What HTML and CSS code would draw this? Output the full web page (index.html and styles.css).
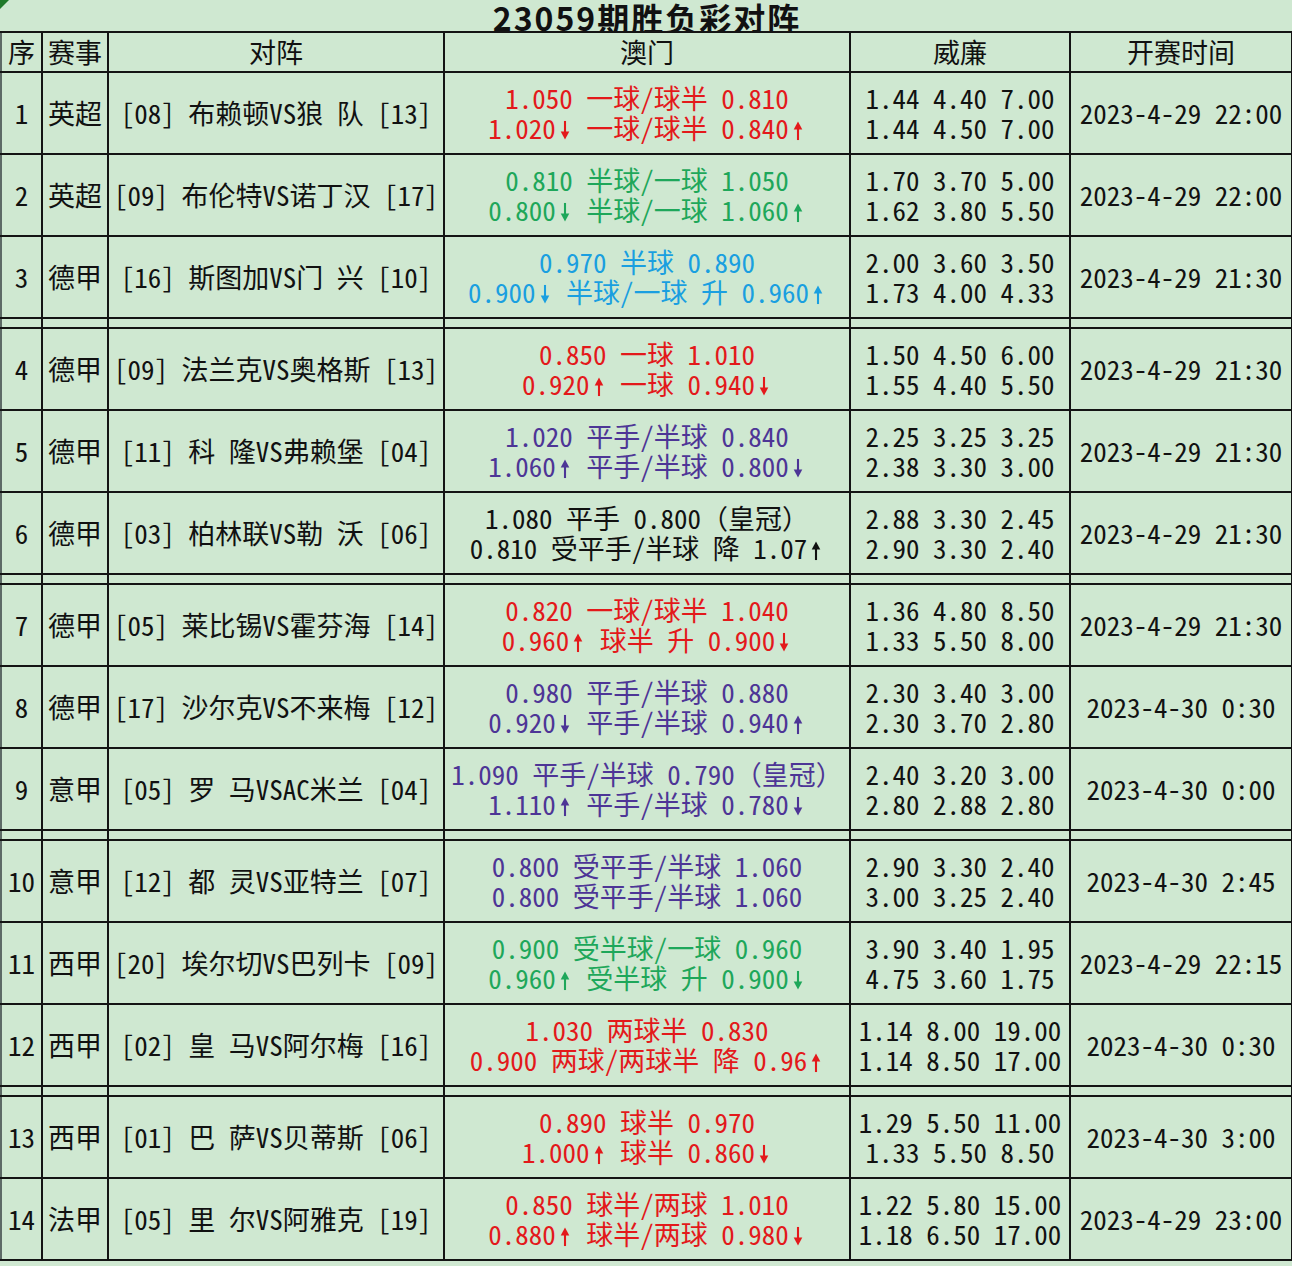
FILE: index.html
```html
<!DOCTYPE html>
<html lang="zh-CN">
<head>
<meta charset="utf-8">
<title>23059期胜负彩对阵</title>
<link rel="stylesheet" href="styles.css">
</head>
<body>
<svg width="0" height="0" class="defs" aria-hidden="true">
  <defs>
    <symbol id="up" viewBox="0 0 14 22"><path d="M7 21V8" stroke="currentColor" stroke-width="2.2" fill="none"/><path d="M2.5 10L7 1.5L11.5 10Z" fill="currentColor"/></symbol>
    <symbol id="dn" viewBox="0 0 14 22"><path d="M7 1V14" stroke="currentColor" stroke-width="2.2" fill="none"/><path d="M2.5 12L7 20.5L11.5 12Z" fill="currentColor"/></symbol>
  </defs>
</svg>
<div class="sheet">
  <span class="marker"></span>
  <div class="title">23059期胜负彩对阵</div>
  <table class="grid">
    <colgroup>
      <col class="c1"><col class="c2"><col class="c3"><col class="c4"><col class="c5"><col class="c6">
    </colgroup>
    <tr class="head"><td>序</td><td>赛事</td><td>对阵</td><td>澳门</td><td>威廉</td><td>开赛时间</td></tr>

    <tr class="row"><td>1</td><td>英超</td><td>[08] 布赖顿VS狼 队 [13]</td>
      <td class="red"><div>1.050 一球/球半 0.810</div><div>1.020<svg class="ar"><use href="#dn"/></svg> 一球/球半 0.840<svg class="ar"><use href="#up"/></svg></div></td>
      <td><div>1.44 4.40 7.00</div><div>1.44 4.50 7.00</div></td><td>2023-4-29 22:00</td></tr>
    <tr class="row"><td>2</td><td>英超</td><td>[09] 布伦特VS诺丁汉 [17]</td>
      <td class="green"><div>0.810 半球/一球 1.050</div><div>0.800<svg class="ar"><use href="#dn"/></svg> 半球/一球 1.060<svg class="ar"><use href="#up"/></svg></div></td>
      <td><div>1.70 3.70 5.00</div><div>1.62 3.80 5.50</div></td><td>2023-4-29 22:00</td></tr>
    <tr class="row"><td>3</td><td>德甲</td><td>[16] 斯图加VS门 兴 [10]</td>
      <td class="cyan"><div>0.970 半球 0.890</div><div>0.900<svg class="ar"><use href="#dn"/></svg> 半球/一球 升 0.960<svg class="ar"><use href="#up"/></svg></div></td>
      <td><div>2.00 3.60 3.50</div><div>1.73 4.00 4.33</div></td><td>2023-4-29 21:30</td></tr>
    <tr class="gap"><td></td><td></td><td></td><td></td><td></td><td></td></tr>

    <tr class="row"><td>4</td><td>德甲</td><td>[09] 法兰克VS奥格斯 [13]</td>
      <td class="red"><div>0.850 一球 1.010</div><div>0.920<svg class="ar"><use href="#up"/></svg> 一球 0.940<svg class="ar"><use href="#dn"/></svg></div></td>
      <td><div>1.50 4.50 6.00</div><div>1.55 4.40 5.50</div></td><td>2023-4-29 21:30</td></tr>
    <tr class="row"><td>5</td><td>德甲</td><td>[11] 科 隆VS弗赖堡 [04]</td>
      <td class="purple"><div>1.020 平手/半球 0.840</div><div>1.060<svg class="ar"><use href="#up"/></svg> 平手/半球 0.800<svg class="ar"><use href="#dn"/></svg></div></td>
      <td><div>2.25 3.25 3.25</div><div>2.38 3.30 3.00</div></td><td>2023-4-29 21:30</td></tr>
    <tr class="row"><td>6</td><td>德甲</td><td>[03] 柏林联VS勒 沃 [06]</td>
      <td class="black"><div>1.080 平手 0.800<span class="fw">（皇冠）</span></div><div>0.810 受平手/半球 降 1.07<svg class="ar"><use href="#up"/></svg></div></td>
      <td><div>2.88 3.30 2.45</div><div>2.90 3.30 2.40</div></td><td>2023-4-29 21:30</td></tr>
    <tr class="gap"><td></td><td></td><td></td><td></td><td></td><td></td></tr>

    <tr class="row"><td>7</td><td>德甲</td><td>[05] 莱比锡VS霍芬海 [14]</td>
      <td class="red"><div>0.820 一球/球半 1.040</div><div>0.960<svg class="ar"><use href="#up"/></svg> 球半 升 0.900<svg class="ar"><use href="#dn"/></svg></div></td>
      <td><div>1.36 4.80 8.50</div><div>1.33 5.50 8.00</div></td><td>2023-4-29 21:30</td></tr>
    <tr class="row"><td>8</td><td>德甲</td><td>[17] 沙尔克VS不来梅 [12]</td>
      <td class="purple"><div>0.980 平手/半球 0.880</div><div>0.920<svg class="ar"><use href="#dn"/></svg> 平手/半球 0.940<svg class="ar"><use href="#up"/></svg></div></td>
      <td><div>2.30 3.40 3.00</div><div>2.30 3.70 2.80</div></td><td>2023-4-30 0:30</td></tr>
    <tr class="row"><td>9</td><td>意甲</td><td>[05] 罗 马VSAC米兰 [04]</td>
      <td class="purple"><div>1.090 平手/半球 0.790<span class="fw">（皇冠）</span></div><div>1.110<svg class="ar"><use href="#up"/></svg> 平手/半球 0.780<svg class="ar"><use href="#dn"/></svg></div></td>
      <td><div>2.40 3.20 3.00</div><div>2.80 2.88 2.80</div></td><td>2023-4-30 0:00</td></tr>
    <tr class="gap"><td></td><td></td><td></td><td></td><td></td><td></td></tr>

    <tr class="row"><td>10</td><td>意甲</td><td>[12] 都 灵VS亚特兰 [07]</td>
      <td class="purple"><div>0.800 受平手/半球 1.060</div><div>0.800 受平手/半球 1.060</div></td>
      <td><div>2.90 3.30 2.40</div><div>3.00 3.25 2.40</div></td><td>2023-4-30 2:45</td></tr>
    <tr class="row"><td>11</td><td>西甲</td><td>[20] 埃尔切VS巴列卡 [09]</td>
      <td class="green"><div>0.900 受半球/一球 0.960</div><div>0.960<svg class="ar"><use href="#up"/></svg> 受半球 升 0.900<svg class="ar"><use href="#dn"/></svg></div></td>
      <td><div>3.90 3.40 1.95</div><div>4.75 3.60 1.75</div></td><td>2023-4-29 22:15</td></tr>
    <tr class="row"><td>12</td><td>西甲</td><td>[02] 皇 马VS阿尔梅 [16]</td>
      <td class="red"><div>1.030 两球半 0.830</div><div>0.900 两球/两球半 降 0.96<svg class="ar"><use href="#up"/></svg></div></td>
      <td><div>1.14 8.00 19.00</div><div>1.14 8.50 17.00</div></td><td>2023-4-30 0:30</td></tr>
    <tr class="gap"><td></td><td></td><td></td><td></td><td></td><td></td></tr>

    <tr class="row"><td>13</td><td>西甲</td><td>[01] 巴 萨VS贝蒂斯 [06]</td>
      <td class="red"><div>0.890 球半 0.970</div><div>1.000<svg class="ar"><use href="#up"/></svg> 球半 0.860<svg class="ar"><use href="#dn"/></svg></div></td>
      <td><div>1.29 5.50 11.00</div><div>1.33 5.50 8.50</div></td><td>2023-4-30 3:00</td></tr>
    <tr class="row"><td>14</td><td>法甲</td><td>[05] 里 尔VS阿雅克 [19]</td>
      <td class="red"><div>0.850 球半/两球 1.010</div><div>0.880<svg class="ar"><use href="#up"/></svg> 球半/两球 0.980<svg class="ar"><use href="#dn"/></svg></div></td>
      <td><div>1.22 5.80 15.00</div><div>1.18 6.50 17.00</div></td><td>2023-4-29 23:00</td></tr>
  </table>
</div>
</body>
</html>
```

FILE: styles.css
```css
html, body {
  margin: 0;
  padding: 0;
  background: #cfe8d1;
}

.defs {
  position: absolute;
  width: 0;
  height: 0;
  overflow: hidden;
}

.sheet {
  position: relative;
  width: 1292px;
  height: 1266px;
  overflow: hidden;
  background: #cfe8d1;
  font-family: "Noto Sans CJK SC", sans-serif;
  color: #111;
}

.marker {
  position: absolute;
  left: 0;
  top: 0;
  width: 0;
  height: 0;
  border-top: 9px solid #1f7a2a;
  border-right: 9px solid transparent;
}

.title {
  height: 29px;
  padding-top: 2px;
  overflow: hidden;
  text-align: center;
  font-size: 32px;
  font-weight: 700;
  line-height: 31px;
  letter-spacing: 2px;
  color: #111;
  padding-left: 2px;
}

.grid {
  border-collapse: collapse;
  table-layout: fixed;
  width: 1291px;
  font-size: 27px;
  font-feature-settings: "hwid" 1;
  white-space: pre;
}

.c1 { width: 41px; }
.c2 { width: 66px; }
.c3 { width: 336px; }
.c4 { width: 406px; }
.c5 { width: 220px; }
.c6 { width: 222px; }

.grid td {
  border: 2px solid #141414;
  padding: 0;
  text-align: center;
  vertical-align: middle;
  line-height: 30px;
  overflow: hidden;
}

.head td {
  height: 38px;
  line-height: 36px;
}

.row td {
  height: 80px;
}

.gap td {
  height: 8px;
}

.grid td:first-child {
  border-left-color: #5d6a66;
}

.ar {
  display: inline-block;
  width: 14px;
  height: 21px;
  margin: 0 1px 0 2px;
  vertical-align: -2px;
  color: inherit;
}

.fw {
  font-feature-settings: normal;
}

.red { color: #e3191b; }
.green { color: #1ea75a; }
.cyan { color: #1a9fe0; }
.purple { color: #4d3596; }
.black { color: #111; }
```
